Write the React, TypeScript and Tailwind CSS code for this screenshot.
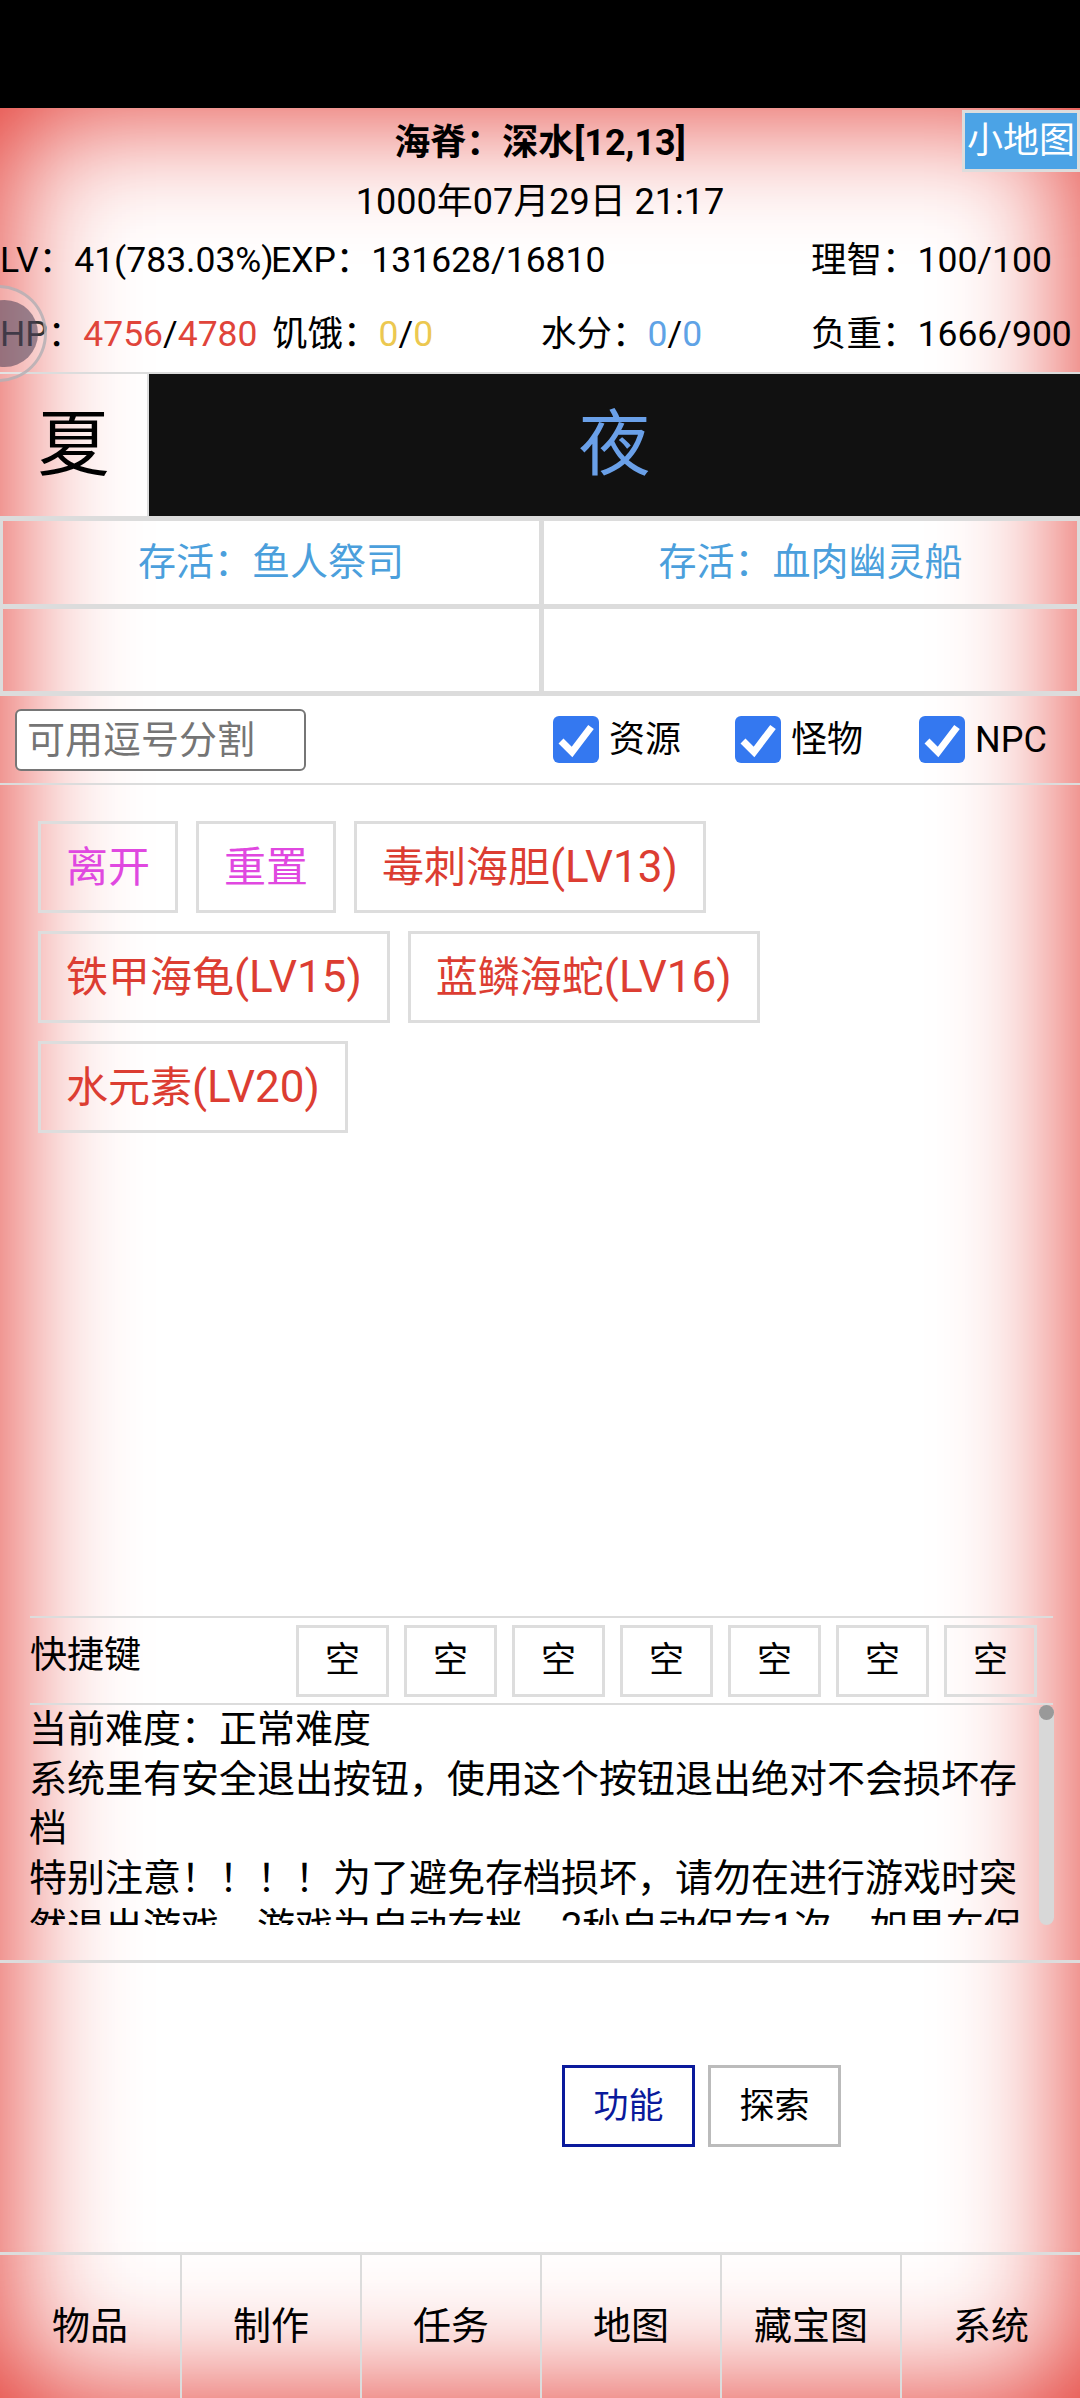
import { useState } from 'react';

const font = { fontFamily: 'Roboto, "Noto Sans CJK SC", sans-serif' };

const enemies = [
  { label: '离开', level: '', color: 'text-[#e048e0]' },
  { label: '重置', level: '', color: 'text-[#e048e0]' },
  { label: '毒刺海胆', level: '(LV13)', color: 'text-[#dc3d32]' },
  { label: '铁甲海龟', level: '(LV15)', color: 'text-[#dc3d32]' },
  { label: '蓝鳞海蛇', level: '(LV16)', color: 'text-[#dc3d32]' },
  { label: '水元素', level: '(LV20)', color: 'text-[#dc3d32]' },
];

const navItems = ['物品', '制作', '任务', '地图', '藏宝图', '系统'];
const slots = [1, 2, 3, 4, 5, 6, 7];

function FilterCheck({ label, gap }: { label: string; gap: string }) {
  return (
    <label className={`flex items-center gap-[10px] ${gap}`}>
      <span className="w-[46px] h-[47px] rounded-[6px] bg-[#3478f0] flex items-center justify-center">
        <svg viewBox="0 0 46 47" className="w-[46px] h-[47px]">
          <path d="M8 25 L19 36 L38 11" fill="none" stroke="#fff" strokeWidth="7" />
        </svg>
      </span>
      <span className="text-[36px] text-black leading-none">{label}</span>
    </label>
  );
}

export default function App() {
  const [filter, setFilter] = useState('');

  return (
    <div style={font} className="relative w-[1080px] h-[2398px] overflow-hidden bg-black text-black">
      {/* status bar */}
      <div className="h-[108px] bg-black" />

      <div className="relative h-[2290px] flex flex-col bg-white shadow-[inset_0_0_130px_#e12921]">
        {/* header */}
        <div className="relative h-[264px] flex flex-col text-[35.5px]">
          <div className="h-[70px] flex items-center justify-center font-bold text-[36px]">海脊：深水[12,13]</div>
          <div className="h-[47px] flex items-center justify-center text-[36px]">1000年07月29日 21:17</div>
          <div className="h-[72px] grid grid-cols-4 items-center whitespace-nowrap">
            <span className="w-[270px]">LV：41(783.03%)</span>
            <span className="col-span-2 pl-[1px]">EXP：131628/16810</span>
            <span className="pl-[1px]">理智：100/100</span>
          </div>
          <div className="h-[75px] grid grid-cols-4 items-center whitespace-nowrap">
            <span>
              HP：<span className="text-[#e0443a]">4756</span>/<span className="text-[#e0443a]">4780</span>
            </span>
            <span className="pl-[2px]">
              饥饿：<span className="text-[#ecc850]">0</span>/<span className="text-[#ecc850]">0</span>
            </span>
            <span className="pl-[1px]">
              水分：<span className="text-[#5fa3e6]">0</span>/<span className="text-[#5fa3e6]">0</span>
            </span>
            <span className="pl-[1px]">负重：1666/900</span>
          </div>
          <button className="absolute top-[2px] right-0 w-[118px] h-[62px] bg-[#4ba3e6] border-[3px] border-[#dddddd] text-white text-[36px] whitespace-nowrap flex items-center justify-center">
            小地图
          </button>
        </div>

        {/* season / time */}
        <div className="h-[149px] flex border-t-2 border-b-[5px] border-[#dcdcdc]">
          <div className="w-[149px] border-r-2 border-[#dcdcdc] flex items-center justify-center text-[72px]">夏</div>
          <div className="flex-1 bg-[#111111] flex items-center justify-center text-[72px] text-[#6aa0e8]">夜</div>
        </div>

        {/* survival table */}
        <div className="flex text-[#4b9fdc] text-[38px]">
          <div className="w-[544px] h-[88px] border-l-[3px] border-r-[5px] border-b-[5px] border-[#dcdcdc] flex items-center justify-center">存活：鱼人祭司</div>
          <div className="flex-1 h-[88px] border-r-[3px] border-b-[5px] border-[#dcdcdc] flex items-center justify-center">存活：血肉幽灵船</div>
        </div>
        <div className="flex">
          <div className="w-[544px] h-[87px] border-l-[3px] border-r-[5px] border-b-[5px] border-[#dcdcdc]" />
          <div className="flex-1 h-[87px] border-r-[3px] border-b-[5px] border-[#dcdcdc]" />
        </div>

        {/* filter */}
        <div className="h-[89px] border-b-2 border-[#dcdcdc] flex items-center">
          <input
            value={filter}
            onChange={(e) => setFilter(e.target.value)}
            placeholder="可用逗号分割"
            className="ml-[15px] w-[291px] h-[62px] rounded-[6px] border-2 border-[#767676] bg-white px-[10px] text-[38px] outline-none placeholder:text-[#757575]"
          />
          <FilterCheck label="资源" gap="ml-[247px]" />
          <FilterCheck label="怪物" gap="ml-[54px]" />
          <FilterCheck label="NPC" gap="ml-[56px]" />
        </div>

        {/* enemy buttons */}
        <div className="h-[831px] px-[38px] pt-[36px] flex flex-wrap content-start gap-[18px]">
          {enemies.map((item) => (
            <button
              key={item.label}
              className={`h-[92px] px-[25px] border-[3px] border-[#dddddd] text-[42px] whitespace-nowrap ${item.color}`}
            >
              {item.label}
              {item.level && <span className="text-[44px]">{item.level}</span>}
            </button>
          ))}
        </div>

        {/* shortcuts */}
        <div className="mx-[30px] w-[1023px] h-[89px] border-y-2 border-[#dcdcdc] flex items-center">
          <span className="w-[266px] text-[37px] pb-[10px]">快捷键</span>
          <div className="flex gap-[15px]">
            {slots.map((slot) => (
              <button key={slot} className="w-[93px] h-[72px] border-[3px] border-[#dddddd] text-[35px] leading-none">
                空
              </button>
            ))}
          </div>
        </div>

        {/* log */}
        <div className="ml-[30px] w-[1024px] h-[220px] flex">
          <div className="w-[1009px] h-[220px] overflow-hidden text-[38px] leading-[49.5px] ml-[-1px] mr-[1px]">
            <p>当前难度：正常难度</p>
            <p>系统里有安全退出按钮，使用这个按钮退出绝对不会损坏存档</p>
            <p>特别注意！！！！为了避免存档损坏，请勿在进行游戏时突然退出游戏，游戏为自动存档，2秒自动保存1次，如果在保存过程中退出游戏可能会损坏存档</p>
          </div>
          <div className="w-[15px] h-[220px] rounded-full bg-[#d8d8d8]">
            <div className="w-[15px] h-[15px] rounded-full bg-[#999999]" />
          </div>
        </div>

        {/* actions */}
        <div className="mt-[35px] h-[292px] border-t-[3px] border-[#dcdcdc] pl-[562px] pt-[102px] flex items-start gap-[13px] text-[35px]">
          <button className="w-[133px] h-[82px] border-[3px] border-[#0a1a9c] text-[#0a1a9c] pt-[2px]">功能</button>
          <button className="w-[133px] h-[82px] border-[3px] border-[#bbbbbb] pt-[2px]">探索</button>
        </div>

        {/* bottom nav */}
        <div className="flex-1 grid grid-cols-6 border-t-[3px] border-[#dcdcdc] text-[38px]">
          {navItems.map((item, i) => (
            <button key={item} className={`flex items-center justify-center ${i > 0 ? 'border-l-2 border-[#dcdcdc]' : ''}`}>
              {item}
            </button>
          ))}
        </div>
      </div>

      {/* floating assistive ball */}
      <div className="absolute left-[-50px] top-[285px] w-[97px] h-[97px] rounded-full border-[3px] border-[#b0adb2]/80 bg-white/20 flex items-center justify-center">
        <div className="ml-[12px] w-[67px] h-[67px] rounded-full bg-[#4a4058]/55" />
      </div>
    </div>
  );
}
